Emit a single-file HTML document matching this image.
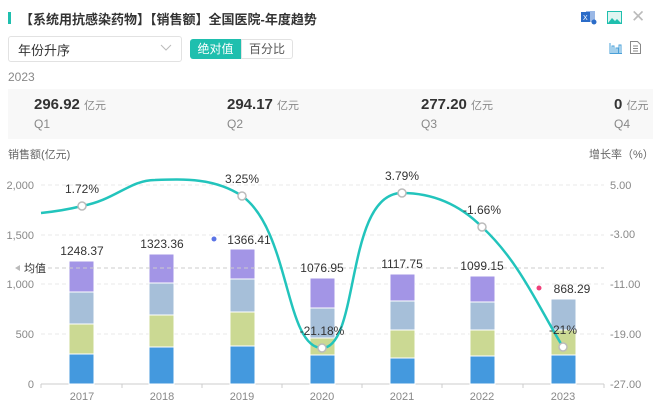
<!DOCTYPE html>
<html><head><meta charset="utf-8"><style>
body{margin:0;width:659px;height:410px;background:#fff;font-family:"Liberation Sans","Noto Sans CJK SC",sans-serif;position:relative;overflow:hidden;color:#333}
.a{position:absolute;white-space:nowrap}
</style></head><body>
<div class="a" style="left:8px;top:12px;width:3px;height:12px;background:#1fbfae"></div>
<div class="a" style="left:20px;top:9px;font-size:13px;font-weight:bold;color:#333">【系统用抗感染药物】【销售额】全国医院-年度趋势</div>
<div class="a" style="left:8px;top:36px;width:172px;height:24px;border:1px solid #e2e2e2;border-radius:3px"></div>
<div class="a" style="left:18px;top:40px;font-size:13px">年份升序</div>
<svg class="a" style="left:160px;top:44px" width="12" height="8"><path d="M1 1l5 5 5-5" fill="none" stroke="#bbb" stroke-width="1"/></svg>
<div class="a" style="left:190px;top:39px;width:51px;height:20px;background:#1fbfae;border-radius:3px 0 0 3px;color:#fff;font-size:12px;line-height:20px;text-align:center">绝对值</div>
<div class="a" style="left:241px;top:39px;width:50px;height:18px;border:1px solid #e2e2e2;border-radius:0 3px 3px 0;font-size:12px;line-height:18px;text-align:center;color:#555">百分比</div>
<svg class="a" style="left:581px;top:10px" width="16" height="15"><rect x="5" y="1" width="9" height="11" fill="#9ab8e6"/><rect x="0" y="2" width="9" height="10" fill="#2b6cc8"/><text x="2" y="10" font-size="7" fill="#fff">X</text><circle cx="13" cy="12" r="2.5" fill="#2b6cc8"/></svg>
<svg class="a" style="left:607px;top:11px" width="15" height="13"><rect x="0.5" y="0.5" width="14" height="12" fill="#dff5f1" stroke="#1fbfae"/><path d="M1 12l4-5 3 3 2-2 4 4z" fill="#1fbfae"/></svg>
<div class="a" style="left:631px;top:7px;font-size:17px;color:#bbb">✕</div>
<svg class="a" style="left:609px;top:42px" width="13" height="12"><path d="M1 12V1M1 11.5h12M3 11V4h2v7M7 11V6h2v5M10 11V3h2v8" stroke="#4aa0d8" fill="none"/></svg>
<svg class="a" style="left:630px;top:41px" width="11" height="13"><path d="M.5.5h7l3 3v9H.5z" fill="none" stroke="#888"/><path d="M3 5h5M3 7.5h5M3 10h5" stroke="#888"/></svg>
<div class="a" style="left:8px;top:70px;font-size:12px;color:#888">2023</div>
<div class="a" style="left:8px;top:89px;width:645px;height:50px;background:#f8f8f8"></div>
<div class="a" style="left:34px;top:96px;font-size:15px;font-weight:bold">296.92 <span style="font-size:11px;font-weight:normal;color:#888">亿元</span></div>
<div class="a" style="left:34px;top:117px;font-size:12px;color:#888">Q1</div>
<div class="a" style="left:227px;top:96px;font-size:15px;font-weight:bold">294.17 <span style="font-size:11px;font-weight:normal;color:#888">亿元</span></div>
<div class="a" style="left:227px;top:117px;font-size:12px;color:#888">Q2</div>
<div class="a" style="left:421px;top:96px;font-size:15px;font-weight:bold">277.20 <span style="font-size:11px;font-weight:normal;color:#888">亿元</span></div>
<div class="a" style="left:421px;top:117px;font-size:12px;color:#888">Q3</div>
<div class="a" style="left:614px;top:96px;font-size:15px;font-weight:bold">0 <span style="font-size:11px;font-weight:normal;color:#888">亿元</span></div>
<div class="a" style="left:614px;top:117px;font-size:12px;color:#888">Q4</div>
<svg class="a" style="left:0;top:0" width="659" height="410" font-family="Liberation Sans, Noto Sans CJK SC, sans-serif">
<text x="8" y="158" font-size="11" fill="#666">销售额(亿元)</text>
<text x="589" y="158" font-size="11" fill="#666">增长率（%）</text>
<g stroke="#e8e8e8" stroke-dasharray="4 3"><path d="M41 185H604M41 235H604M41 284H604M41 334H604"/></g>
<path d="M41 384H604" stroke="#ccc"/>
<g stroke="#ccc"><path d="M41 384v4M122 384v4M202 384v4M282 384v4M362 384v4M442 384v4M523 384v4M604 384v4"/></g>
<g font-size="11" fill="#888" text-anchor="end"><text x="34" y="189">2,000</text><text x="34" y="239">1,500</text><text x="34" y="288">1,000</text><text x="34" y="338">500</text><text x="34" y="388">0</text></g>
<g font-size="11" fill="#888"><text x="610" y="189">5.00</text><text x="610" y="238">-3.00</text><text x="610" y="288">-11.00</text><text x="610" y="338">-19.00</text><text x="610" y="388">-27.00</text></g>
<g font-size="11" fill="#888" text-anchor="middle"><text x="82" y="400">2017</text><text x="162" y="400">2018</text><text x="242" y="400">2019</text><text x="322" y="400">2020</text><text x="402" y="400">2021</text><text x="482" y="400">2022</text><text x="563" y="400">2023</text></g>
<g stroke="#fff" stroke-width="1">
<rect x="69" y="261" width="25" height="31" fill="#a395e6"/><rect x="69" y="292" width="25" height="32" fill="#a6bfd9"/><rect x="69" y="324" width="25" height="30" fill="#cbd993"/><rect x="69" y="354" width="25" height="30" fill="#4499de"/>
<rect x="149" y="254" width="25" height="29" fill="#a395e6"/><rect x="149" y="283" width="25" height="32" fill="#a6bfd9"/><rect x="149" y="315" width="25" height="32" fill="#cbd993"/><rect x="149" y="347" width="25" height="37" fill="#4499de"/>
<rect x="230" y="249" width="25" height="30" fill="#a395e6"/><rect x="230" y="279" width="25" height="33" fill="#a6bfd9"/><rect x="230" y="312" width="25" height="34" fill="#cbd993"/><rect x="230" y="346" width="25" height="38" fill="#4499de"/>
<rect x="310" y="278" width="25" height="30" fill="#a395e6"/><rect x="310" y="308" width="25" height="30" fill="#a6bfd9"/><rect x="310" y="338" width="25" height="17" fill="#cbd993"/><rect x="310" y="355" width="25" height="29" fill="#4499de"/>
<rect x="390" y="274" width="25" height="27" fill="#a395e6"/><rect x="390" y="301" width="25" height="29" fill="#a6bfd9"/><rect x="390" y="330" width="25" height="28" fill="#cbd993"/><rect x="390" y="358" width="25" height="26" fill="#4499de"/>
<rect x="470" y="276" width="25" height="26" fill="#a395e6"/><rect x="470" y="302" width="25" height="28" fill="#a6bfd9"/><rect x="470" y="330" width="25" height="26" fill="#cbd993"/><rect x="470" y="356" width="25" height="28" fill="#4499de"/>
<rect x="551" y="299" width="25" height="31" fill="#a6bfd9"/><rect x="551" y="330" width="25" height="25" fill="#cbd993"/><rect x="551" y="355" width="25" height="29" fill="#4499de"/>
</g>
<path d="M41 268H604" stroke="#ccc" stroke-dasharray="4 3"/>
<path d="M15 268l5-3v6z" fill="#bbb"/><text x="24" y="272" font-size="11" fill="#333">均值</text>
<path d="M41 213C60 211 70 209 82 206C115 200 130 180 155 180C185 179 215 178 242 196C290 230 285 348 322 348C360 348 345 193 402 193C440 193 465 210 482 227C520 262 540 310 563 347" fill="none" stroke="#22c4bc" stroke-width="2.5"/>
<g fill="#fff" stroke="#bbb" stroke-width="1.5"><circle cx="82" cy="206" r="4"/><circle cx="242" cy="196" r="4"/><circle cx="322" cy="348" r="4"/><circle cx="402" cy="193" r="4"/><circle cx="482" cy="227" r="4"/><circle cx="563" cy="347" r="4"/></g>
<g font-size="12" fill="#333" text-anchor="middle">
<text x="82" y="193">1.72%</text><text x="242" y="183">3.25%</text><text x="322" y="335">-21.18%</text><text x="402" y="180">3.79%</text><text x="482" y="214">-1.66%</text><text x="563" y="334">-21%</text>
<text x="82" y="255">1248.37</text><text x="162" y="248">1323.36</text><text x="249" y="244">1366.41</text><text x="322" y="272">1076.95</text><text x="402" y="268">1117.75</text><text x="482" y="270">1099.15</text><text x="572" y="293">868.29</text>
</g>
<circle cx="214" cy="239" r="2.5" fill="#5b74e6"/><circle cx="539" cy="288" r="2.5" fill="#f0407a"/>
</svg>
</body></html>
